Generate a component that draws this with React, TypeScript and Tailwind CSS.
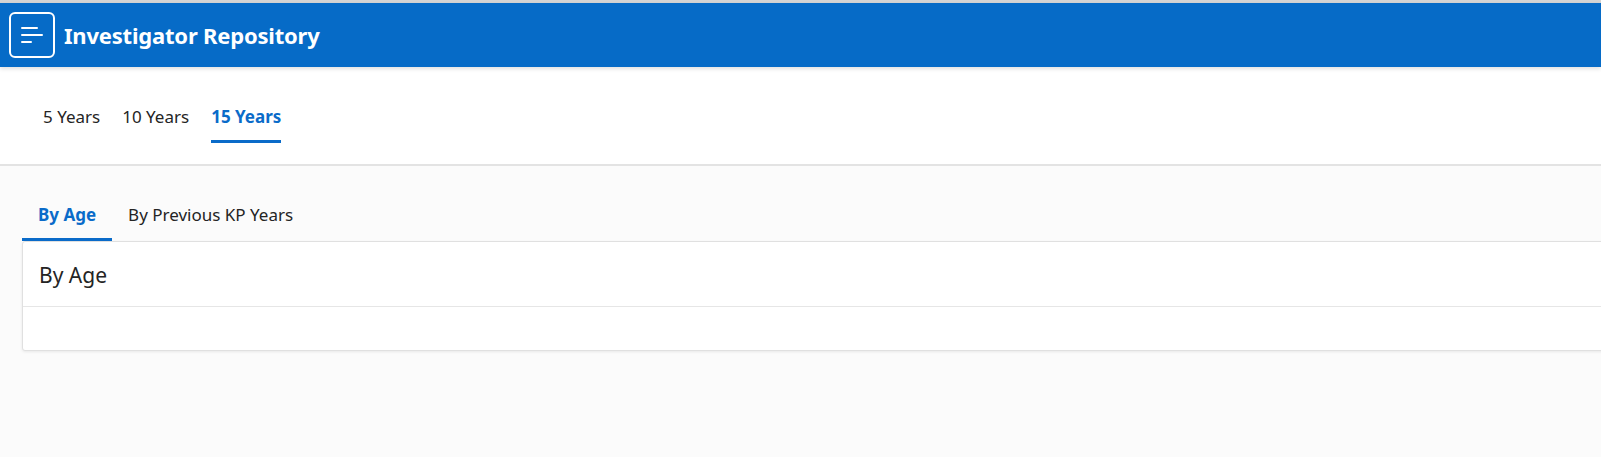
import { useState } from "react";

const periods = ["5 Years", "10 Years", "15 Years"];
const views = ["By Age", "By Previous KP Years"];

const App = () => {
  const [period, setPeriod] = useState("15 Years");
  const [view, setView] = useState("By Age");

  return (
    <div className="min-h-[457px] overflow-hidden bg-[#fbfbfb] font-['Noto_Sans',sans-serif] text-[#242424]">
      <div className="h-[3px] bg-[#d4d4d4]" />

      {/* Header */}
      <header className="relative z-10 flex h-[64px] items-center bg-[#066bc7] pl-[9px] shadow-[0_2px_4px_rgba(0,0,0,0.12)]">
        <button className="flex h-[46px] w-[46px] flex-col justify-center gap-[5px] rounded-[6px] border-2 border-white pl-[10px]">
          <span className="block h-[2px] w-[17px] rounded bg-white" />
          <span className="block h-[2px] w-[22px] rounded bg-white" />
          <span className="block h-[2px] w-[11px] rounded bg-white" />
        </button>
        <h1 className="ml-[9px] text-[22px] font-bold tracking-[-0.2px] text-white">Investigator Repository</h1>
      </header>

      {/* Period tabs */}
      <div className="h-[99px] border-b-2 border-[#e3e3e3] bg-white pl-[43px] pt-[37px]">
        <div className="flex gap-[22px]">
          {periods.map((p) => (
            <button
              key={p}
              onClick={() => setPeriod(p)}
              className={`border-b-[3px] pb-[11px] text-[17px] leading-[25px] ${
                period === p ? "border-[#0a6bc9] font-bold text-[#0a6bc9]" : "border-transparent"
              }`}
            >
              {p}
            </button>
          ))}
        </div>
      </div>

      {/* View tabs + card */}
      <div className="pl-[22px] pt-[36px]">
        <div className="flex">
          {views.map((v) => (
            <button
              key={v}
              onClick={() => setView(v)}
              className={`border-b-[3px] px-[16px] pb-[11px] text-[17px] leading-[25px] ${
                view === v ? "border-[#0a6bc9] font-bold text-[#0a6bc9]" : "border-transparent"
              }`}
            >
              {v}
            </button>
          ))}
        </div>
        <div className="mr-[-20px] rounded-[3px] border border-[#e0e0e0] bg-white shadow-[0_1px_3px_rgba(0,0,0,0.08)]">
          <div className="border-b border-[#e6e6e6] px-[16px] pt-[18px] pb-[16px] text-[21px] leading-[30px]">{view}</div>
          <div className="h-[43px]" />
        </div>
      </div>
    </div>
  );
};

export default App;
